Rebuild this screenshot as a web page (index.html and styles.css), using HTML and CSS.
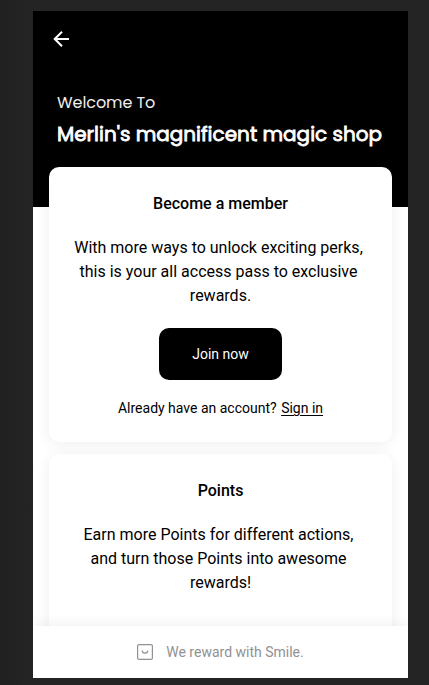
FILE: index.html
```
<!DOCTYPE html>
<html lang="en">
<head>
<meta charset="utf-8">
<title>Rewards</title>
<link rel="stylesheet" href="styles.css">
</head>
<body>
<main class="panel">
  <header class="header">
    <svg class="back" width="18" height="18" viewBox="0 0 18 18"><path d="M17 9H3.500M10 1.700 2.700 9l7.300 7.300" fill="none" stroke="#fff" stroke-width="2"/></svg>
    <div class="welcome"><span>Welcome To</span></div>
    <h1 class="shop"><span>Merlin's magnificent magic shop</span></h1>
  </header>
  <div class="cards">
    <section class="card">
      <h2><span>Become a member</span></h2>
      <p>With more ways to unlock exciting perks,&nbsp;<br>this is your all access pass to exclusive&nbsp;<br>rewards.</p>
      <button class="join">Join now</button>
      <div class="signin"><span>Already have an account?</span> <a>Sign in</a></div>
    </section>
    <section class="card">
      <h2><span>Points</span></h2>
      <p>Earn more Points for different actions,&nbsp;<br>and turn those Points into awesome&nbsp;<br>rewards!</p>
    </section>
  </div>
  <footer class="footer">
    <svg width="16" height="16" viewBox="0 0 16 16" fill="none" stroke="#919191"><rect x=".6" y=".6" width="14.8" height="14.8" rx="1.5" stroke-width="1.2"/><path d="M5.200 6.500c.3 3.600 5.300 3.600 5.600 0" stroke-width="1.200"/></svg>
    <span>We reward with Smile.</span>
  </footer>
</main>
</body>
</html>
```
FILE: styles.css
```
* { box-sizing: border-box; }
body {
  margin: 0;
  height: 685px;
  padding: 11px 21px 7px 33px;
  overflow: hidden;
  background: linear-gradient(90deg, #212121, #242424 33px);
  font-family: Roboto, sans-serif;
  color: #000;
}
.panel {
  width: 375px;
  height: 667px;
  display: flex;
  flex-direction: column;
  background: #fff;
  overflow: hidden;
}
.header {
  flex: none;
  height: 196px;
  padding: 19px 24px 0;
  background: #000;
  color: #fff;
  font-family: Poppins, Inter, sans-serif;
}
.back { display: block; margin-left: -5px; }
.welcome {
  margin-top: 43px;
  font-size: 16px;
  line-height: 24px;
  font-weight: 400;
  letter-spacing: -.07px;
  color: #eee;
}
.shop {
  margin: 3px 0 0;
  font-size: 20px;
  line-height: 32px;
  font-weight: 400;
  -webkit-text-stroke: .8px #fff;
  white-space: nowrap;
}
.cards {
  flex: 1;
  min-height: 0;
  margin-top: -40px;
  padding: 0 16px;
  display: flex;
  flex-direction: column;
  gap: 12px;
}
.card {
  flex: none;
  height: 275px;
  padding: 25px 16px 24px;
  display: flex;
  flex-direction: column;
  align-items: center;
  border-radius: 10px;
  background: #fff;
  box-shadow: 0 2px 14px rgba(0, 0, 0, .07);
  text-align: center;
}
.card h2 {
  margin: 0;
  font-size: 16px;
  line-height: 24px;
  font-weight: 500;
}
.card p {
  margin: 20px 0;
  font-size: 16px;
  line-height: 24px;
  white-space: nowrap;
}
.join {
  width: 123px;
  height: 52px;
  padding: 0;
  border: 0;
  border-radius: 10px;
  background: #000;
  color: #fff;
  font: 400 14px/20px Roboto, sans-serif;
}
.signin {
  margin-top: 18px;
  font-size: 14px;
  line-height: 20px;
}
.signin a {
  margin-left: 1px;
  text-decoration: underline;
  text-underline-offset: 2px;
}
.footer {
  flex: none;
  position: relative;
  height: 52px;
  display: flex;
  align-items: center;
  justify-content: center;
  gap: 13px;
  background: #fff;
  box-shadow: 0 0 14px rgba(0, 0, 0, .08);
  color: #919191;
  font-size: 14px;
}
```
